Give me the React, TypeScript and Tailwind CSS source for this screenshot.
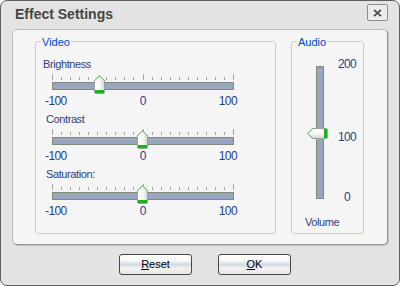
import React from "react";

function HThumb({ left }: { left: number }) {
  return (
    <svg
      className="absolute top-[-8px]"
      style={{ left }}
      width={11}
      height={19}
      viewBox="0 0 11 19"
    >
      <defs>
        <linearGradient id="hthumbfill" x1="0" y1="0" x2="1" y2="0">
          <stop offset="0" stopColor="#ffffff" />
          <stop offset="0.55" stopColor="#f6f6f6" />
          <stop offset="1" stopColor="#d4d4d4" />
        </linearGradient>
      </defs>
      <path
        d="M5.5 0.5 L10.5 5.5 L10.5 17 Q10.5 18.5 9 18.5 L2 18.5 Q0.5 18.5 0.5 17 L0.5 5.5 Z"
        fill="url(#hthumbfill)"
        stroke="#9aa39a"
      />
      <polyline points="0.5,5.8 5.5,0.8 10.5,5.8" fill="none" stroke="#55c455" />
      <rect x="1" y="15" width="9" height="3" fill="#21ad21" />
    </svg>
  );
}

function VThumb({ top }: { top: number }) {
  return (
    <svg
      className="absolute left-[-10px]"
      style={{ top }}
      width={21}
      height={11}
      viewBox="0 0 21 11"
    >
      <defs>
        <linearGradient id="vthumbfill" x1="0" y1="0" x2="0" y2="1">
          <stop offset="0" stopColor="#ffffff" />
          <stop offset="0.55" stopColor="#f6f6f6" />
          <stop offset="1" stopColor="#d4d4d4" />
        </linearGradient>
      </defs>
      <path
        d="M0.5 5.5 L5.5 0.5 L19 0.5 Q20.5 0.5 20.5 2 L20.5 9 Q20.5 10.5 19 10.5 L5.5 10.5 Z"
        fill="url(#vthumbfill)"
        stroke="#9aa39a"
      />
      <polyline points="5.8,0.5 0.8,5.5 5.8,10.5" fill="none" stroke="#55c455" />
      <rect x="17" y="1" width="3" height="9" fill="#21ad21" />
    </svg>
  );
}

function Ticks() {
  const ticks = Array.from({ length: 21 }, (_, i) => i);
  return (
    <svg className="ml-[16px] mt-[3px] block" width={182} height={6}>
      {ticks.map((i) => {
        const x = Math.round(i * 9.05) + 0.5;
        const tall = i === 0 || i === 10 || i === 20;
        return (
          <line
            key={i}
            x1={x}
            x2={x}
            y1={tall ? 0 : 3}
            y2={6}
            stroke="#a3a3a3"
            strokeWidth={1}
          />
        );
      })}
    </svg>
  );
}

function HSlider({
  label,
  value,
  labelClass,
}: {
  label: string;
  value: number;
  labelClass: string;
}) {
  const center = 5 + ((value + 100) / 200) * 171;
  return (
    <div className="flex flex-col">
      <div className={labelClass}>{label}</div>
      <Ticks />
      <div className="relative ml-[16px] mt-[2px] h-[8px] w-[182px] border border-[#7f8b74] bg-[#98a6c0]">
        <HThumb left={Math.round(center - 5.5 - 1)} />
      </div>
      <div className="ml-[9px] mt-[4px] flex w-[192px] justify-between text-[12px] leading-[14px] tracking-[-0.6px] text-[#1f4287]">
        <span>-100</span>
        <span>0</span>
        <span>100</span>
      </div>
    </div>
  );
}

export default function App() {
  const volume = 100;
  const vCenter = 66 + 6 + (1 - volume / 200) * 122;
  return (
    <div className="font-['Liberation_Sans',Arial,sans-serif] bg-white">
      <div className="flex h-[286px] w-[400px] flex-col rounded-[7px] border border-[#5e5e5e] bg-[#e3e3e3]">
        {/* title bar */}
        <div className="flex h-[28px] items-start">
          <div className="pl-[14px] pt-[4px] text-[14px] font-bold leading-[18px] text-[#454545]">
            Effect Settings
          </div>
          <div className="ml-auto mr-[11px] mt-[3px] flex h-[17px] w-[21px] items-center justify-center rounded-[2px] border border-[#8c8c8c] bg-[#ececec]">
            <svg width={9} height={8} viewBox="0 0 9 8">
              <path d="M1 0.8 L8 7.2 M8 0.8 L1 7.2" stroke="#4a4a4a" strokeWidth={1.8} />
            </svg>
          </div>
        </div>

        {/* panel */}
        <div className="mx-[11px] h-[216px] rounded-[5px] border border-[#bdbdbd] border-b-[#939393] border-r-[#939393] bg-[#f5f5f5] shadow-[1px_1px_0_#c2c2c2]">
          <div className="flex gap-[15px] pl-[22px] pt-[11px]">
            {/* Video group */}
            <div className="relative h-[193px] w-[241px] rounded-[3px] border border-[#d0d0bf]">
              <span className="absolute left-[5px] top-[-6px] bg-[#f5f5f5] px-[1px] text-[11px] leading-[13px] text-[#0046d5]">
                Video
              </span>
              <div className="flex flex-col gap-[5px] pt-[16px]">
                <HSlider
                  label="Brightness"
                  value={-50}
                  labelClass="ml-[7px] h-[13px] text-[11px] leading-[13px] tracking-[-0.4px] text-[#2e3f78]"
                />
                <HSlider
                  label="Contrast"
                  value={0}
                  labelClass="ml-[10px] h-[13px] text-[11px] leading-[13px] tracking-[-0.4px] text-[#2e3f78]"
                />
                <HSlider
                  label="Saturation:"
                  value={0}
                  labelClass="ml-[10px] h-[13px] text-[11px] leading-[13px] tracking-[-0.4px] text-[#2e3f78]"
                />
              </div>
            </div>

            {/* Audio group */}
            <div className="relative h-[193px] w-[73px] rounded-[3px] border border-[#d0d0bf]">
              <span className="absolute left-[5px] top-[-6px] bg-[#f5f5f5] px-[1px] text-[11px] leading-[13px] text-[#0046d5]">
                Audio
              </span>
              <div className="mt-[15px] flex">
                <div className="relative ml-[24px] mt-[9px] h-[133px] w-[8px] border border-[#7f8b74] bg-[#98a6c0]">
                  <VThumb top={Math.round(vCenter - 5.5 - 67)} />
                </div>
                <div className="ml-[8px] flex w-[30px] flex-col items-center text-[12px] leading-[14px] tracking-[-0.6px] text-[#1f4287]">
                  <span>200</span>
                  <span className="mt-[59px]">100</span>
                  <span className="mt-[46px]">0</span>
                </div>
              </div>
              <div className="ml-[13px] mt-[12px] text-[11px] leading-[13px] tracking-[-0.4px] text-[#2e3f78]">
                Volume
              </div>
            </div>
          </div>
        </div>

        {/* buttons */}
        <div className="flex justify-center gap-[26px] pl-[10px] pt-[9px]">
          <button className="h-[21px] w-[73px] rounded-[3px] border border-[#474747] bg-[linear-gradient(to_bottom,#ffffff_0%,#f7f7f7_30%,#d3dae5_50%,#f2f2f2_70%,#e6e6e6_100%)] text-[11px] leading-[13px] text-black">
            <span className="underline underline-offset-[1px]">R</span>eset
          </button>
          <button className="h-[21px] w-[73px] rounded-[3px] border border-[#474747] bg-[linear-gradient(to_bottom,#ffffff_0%,#f7f7f7_30%,#d3dae5_50%,#f2f2f2_70%,#e6e6e6_100%)] text-[11px] leading-[13px] text-black">
            <span className="underline underline-offset-[1px]">O</span>K
          </button>
        </div>
      </div>
    </div>
  );
}
